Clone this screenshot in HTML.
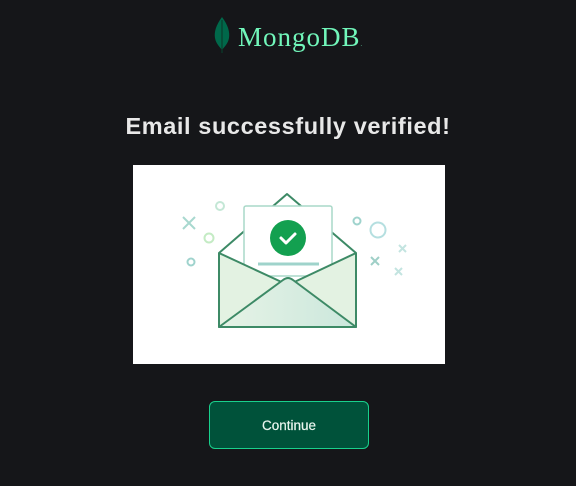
<!DOCTYPE html>
<html><head><meta charset="utf-8"><style>
html,body{margin:0;padding:0;background:#151619;width:576px;height:486px;overflow:hidden;font-family:"Liberation Sans",sans-serif}
.logo{position:absolute;left:212px;top:16px;height:38px}
.logo span{position:absolute;left:26px;top:6px;font-family:"Liberation Serif",serif;font-size:27px;color:#71f6ba;white-space:nowrap;letter-spacing:1px}
h1{position:absolute;left:0;width:576px;top:113px;margin:0;text-align:center;font-size:23.5px;font-weight:bold;color:#e8e8e8;letter-spacing:0.6px}
.img{position:absolute;left:133px;top:165px;width:312px;height:199px;background:#fff}
.btn{position:absolute;left:209px;top:401px;width:158px;height:46px;border:1px solid #19d08c;border-radius:6px;background:#00523a;color:#e8f5ee;font-size:13.5px;text-align:center;line-height:47px;-webkit-text-stroke:0.2px #e8f5ee}
</style></head><body>
<div class="logo">
<svg width="20" height="38" viewBox="0 0 20 38" style="position:absolute;left:0;top:0"><path d="M10 1 C4 9 2 16 3 22 C4 28 8 31 10 34 C12 31 16 28 17 22 C18 16 16 9 10 1Z" fill="#00684a"/><path d="M10 4 V37" stroke="#0a3d2c" stroke-width="1.2"/></svg>
<span>MongoDB<small style="font-size:6px">.</small></span>
</div>
<h1>Email successfully verified!</h1>
<div class="img">
<svg width="312" height="199" viewBox="0 0 312 199">
<defs><linearGradient id="g" x1="0" x2="1"><stop offset="0" stop-color="#e6f3e6"/><stop offset="1" stop-color="#cbe7dc"/></linearGradient></defs>
<g fill="none" stroke-width="2">
<path d="M50 52 L62 64 M62 52 L50 64" stroke="#a8d8cf"/>
<circle cx="87" cy="41" r="4" stroke="#c4e7d6"/>
<circle cx="76" cy="73" r="4.5" stroke="#c4ebc4"/>
<circle cx="58" cy="97" r="3.5" stroke="#9fd3cd"/>
<circle cx="224" cy="56" r="3.5" stroke="#9fd3cd"/>
<circle cx="245" cy="65" r="7.5" stroke="#b5dfe0"/>
<path d="M238 92 L246 100 M246 92 L238 100" stroke="#9fcfc7"/>
<path d="M266 80 L273 87 M273 80 L266 87" stroke="#c3e4e0"/>
<path d="M262 103 L269 110 M269 103 L262 110" stroke="#c3e4e0"/>
</g>
<path d="M86 88 L154 29 L223 88" fill="#fff" stroke="#3d8a66" stroke-width="2" stroke-linejoin="round"/>
<rect x="111" y="41" width="88" height="70" rx="2" fill="#fff" stroke="#a9d8c8" stroke-width="1.5"/>
<circle cx="155" cy="73" r="18" fill="#13a050"/>
<path d="M148 73 L153 78 L162 69" fill="none" stroke="#fff" stroke-width="3" stroke-linecap="round" stroke-linejoin="round"/>
<path d="M125 99 H186" stroke="#9fd3cb" stroke-width="3"/>
<path d="M86 88 L155 120 L223 88 V162 H86 Z" fill="#e3f2e2" stroke="#3d8a66" stroke-width="2" stroke-linejoin="round"/>
<path d="M86 162 L150 115 Q155 111 160 115 L223 162 Z" fill="url(#g)" stroke="#3d8a66" stroke-width="2" stroke-linejoin="round"/>
</svg>
</div>
<div class="btn">Continue</div>
</body></html>
